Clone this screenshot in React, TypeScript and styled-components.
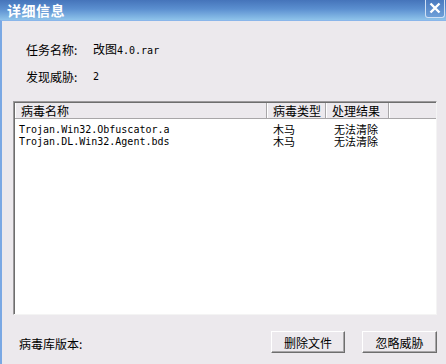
import styled, { createGlobalStyle } from "styled-components";

const GlobalStyle = createGlobalStyle`
  html, body {
    margin: 0;
    padding: 0;
    background: #ece9ed;
  }
  * {
    box-sizing: border-box;
  }
`;

const columns = [
  { title: "病毒名称", width: 252 },
  { title: "病毒类型", width: 59 },
  { title: "处理结果", width: 63 },
];

const threats = [
  { name: "Trojan.Win32.Obfuscator.a", type: "木马", result: "无法清除" },
  { name: "Trojan.DL.Win32.Agent.bds", type: "木马", result: "无法清除" },
];

const Window = styled.div`
  width: 446px;
  height: 364px;
  display: flex;
  flex-direction: column;
  background: #ece9ed;
  font-family: "Noto Sans CJK SC", "DejaVu Sans", sans-serif;
  font-size: 12px;
  color: #000;
  overflow: hidden;
`;

const TitleBar = styled.div`
  height: 20px;
  flex-shrink: 0;
  display: flex;
  align-items: center;
  justify-content: space-between;
  padding: 0 1px 0 7px;
  background: linear-gradient(#4574ba 0%, #5b8fd0 45%, #8ec3ea 100%);
`;

const Title = styled.span`
  color: #fff;
  font-size: 14px;
  font-weight: bold;
  line-height: 14px;
  letter-spacing: 0.5px;
`;

const CloseButton = styled.div`
  width: 20px;
  height: 18px;
  margin-top: -3px;
  display: flex;
  align-items: center;
  justify-content: center;
  border: 1px solid #cfe0f4;
  border-top: none;
  border-radius: 0 0 3px 3px;
  background: linear-gradient(#4a7ac0, #6d9fd8);
`;

const Body = styled.div`
  flex: 1;
  display: flex;
  flex-direction: column;
  border-left: 2px solid #7aa8e4;
  border-top: 1px solid #8ab6ea;
  padding: 0 9px 0 11px;
`;

const Info = styled.div`
  display: flex;
  flex-direction: column;
  gap: 15px;
  padding: 23px 0 0 13px;
`;

const InfoRow = styled.div`
  display: flex;
  height: 12px;
  align-items: center;
  line-height: 12px;
`;

const Label = styled.span`
  width: 67px;
  flex-shrink: 0;
`;

const Mono = styled.span`
  font-family: "DejaVu Sans Mono", "Liberation Mono", monospace;
  font-size: 10px;
`;

const ListBox = styled.div`
  margin-top: 18px;
  height: 214px;
  display: flex;
  flex-direction: column;
  background: #fff;
  border: 1px solid;
  border-color: #9c9a9c #f4f4f4 #f4f4f4 #9c9a9c;
  box-shadow: inset 1px 1px 0 #6e6e6e;
`;

const HeaderRow = styled.div`
  display: flex;
  height: 16px;
  margin: 1px 0 0 1px;
  background: #ece9ed;
  border-bottom: 1px solid #a8a6a8;
`;

const HeaderCell = styled.div<{ $width?: number }>`
  ${(p) => (p.$width ? `width: ${p.$width}px;` : "flex: 1;")}
  flex-shrink: 0;
  padding-left: 6px;
  line-height: 15px;
  border-right: 1px solid #a8a6a8;
  box-shadow: inset 1px 0 0 #fff;
  white-space: nowrap;
  &:last-child {
    border-right: none;
  }
`;

const Rows = styled.div`
  padding-top: 4px;
  padding-left: 1px;
`;

const Row = styled.div`
  display: flex;
  height: 12px;
  align-items: center;
`;

const Cell = styled.div<{ $width: number; $pad: number }>`
  width: ${(p) => p.$width}px;
  flex-shrink: 0;
  padding-left: ${(p) => p.$pad}px;
  font-size: 11px;
  line-height: 12px;
  white-space: nowrap;
`;

const Footer = styled.div`
  margin-top: 16px;
  display: flex;
  align-items: center;
  height: 22px;
`;

const Version = styled.span`
  flex: 1;
  padding-left: 6px;
  margin-top: 2px;
`;

const Button = styled.button<{ $width: number }>`
  width: ${(p) => p.$width}px;
  height: 22px;
  margin-left: 17px;
  padding: 0;
  font-family: inherit;
  font-size: 12px;
  color: #000;
  background: #ece9ed;
  border: 1px solid;
  border-color: #fff #6e6e6e #6e6e6e #fff;
  box-shadow: inset -1px -1px 0 #a8a6a8;
`;

export default function App() {
  return (
    <>
      <GlobalStyle />
      <Window>
        <TitleBar>
          <Title>详细信息</Title>
          <CloseButton>
            <svg width="12" height="12" viewBox="0 0 12 12">
              <path d="M1.5 1.5 L10.5 10.5 M10.5 1.5 L1.5 10.5" stroke="#fff" strokeWidth="2.4" />
            </svg>
          </CloseButton>
        </TitleBar>
        <Body>
          <Info>
            <InfoRow>
              <Label>任务名称:</Label>
              <span>
                改图<Mono>4.0.rar</Mono>
              </span>
            </InfoRow>
            <InfoRow>
              <Label>发现威胁:</Label>
              <Mono>2</Mono>
            </InfoRow>
          </Info>
          <ListBox>
            <HeaderRow>
              {columns.map((c) => (
                <HeaderCell key={c.title} $width={c.width}>
                  {c.title}
                </HeaderCell>
              ))}
              <HeaderCell />
            </HeaderRow>
            <Rows>
              {threats.map((t, i) => (
                <Row key={i}>
                  <Cell $width={252} $pad={4}>
                    <Mono>{t.name}</Mono>
                  </Cell>
                  <Cell $width={59} $pad={6}>
                    {t.type}
                  </Cell>
                  <Cell $width={63} $pad={8}>
                    {t.result}
                  </Cell>
                </Row>
              ))}
            </Rows>
          </ListBox>
          <Footer>
            <Version>病毒库版本:</Version>
            <Button $width={74}>删除文件</Button>
            <Button $width={75}>忽略威胁</Button>
          </Footer>
        </Body>
      </Window>
    </>
  );
}
